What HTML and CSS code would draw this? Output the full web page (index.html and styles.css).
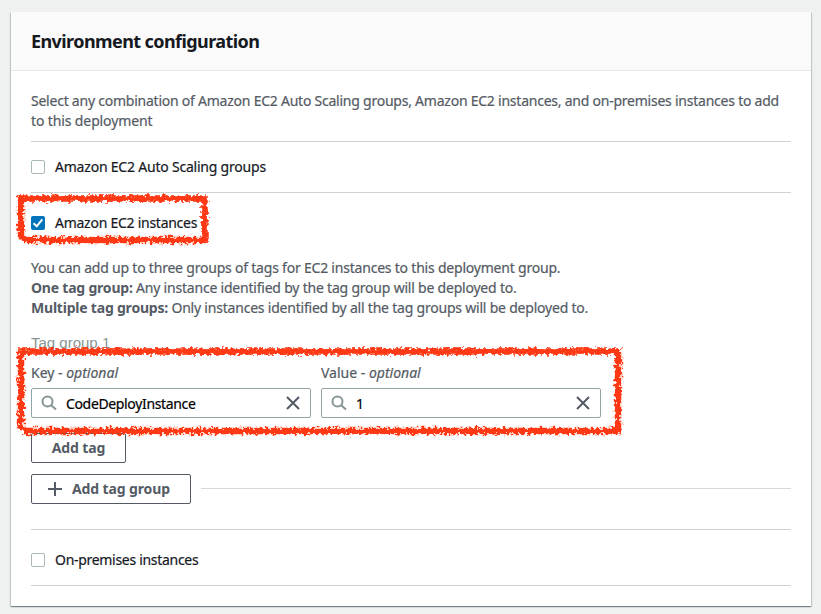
FILE: index.html
```html
<!DOCTYPE html>
<html lang="en">
<head>
<meta charset="utf-8">
<title>Environment configuration</title>
<link rel="stylesheet" href="styles.css">
</head>
<body>
<main class="panel">
  <header class="panel-header"><h2>Environment configuration</h2></header>
  <div class="panel-body">
    <p class="intro">Select any combination of Amazon EC2 Auto Scaling groups, Amazon EC2 instances, and on-premises instances to add<br><span class="short">to this deployment</span></p>
    <label class="option option-first"><i class="box"></i><span>Amazon EC2 Auto Scaling groups</span></label>
    <section class="ec2">
      <label class="option-checked"><i class="box checked"><svg viewBox="0 0 14 14"><path d="M2.5 7.3 5.8 10.3 11.3 3.3"/></svg></i><span>Amazon EC2 instances</span></label>
      <p class="help">You can add up to three groups of tags for EC2 instances to this deployment group.<br><b>One tag group:</b> Any instance identified by the tag group will be deployed to.<br><b>Multiple tag groups:</b> Only instances identified by all the tag groups will be deployed to.</p>
      <div class="group-title">Tag group 1</div>
      <div class="fields">
        <div class="field"><div class="label">Key - <em>optional</em></div>
          <div class="input"><svg class="search" viewBox="0 0 16 16"><circle cx="6.5" cy="6.5" r="5"/><path d="M10.2 10.2 15 14.6"/></svg><span class="value">CodeDeployInstance</span><svg class="close" viewBox="0 0 14 14"><path d="M1 1 13 13M13 1 1 13"/></svg></div></div>
        <div class="field"><div class="label">Value - <em>optional</em></div>
          <div class="input"><svg class="search" viewBox="0 0 16 16"><circle cx="6.5" cy="6.5" r="5"/><path d="M10.2 10.2 15 14.6"/></svg><span class="value">1</span><svg class="close" viewBox="0 0 14 14"><path d="M1 1 13 13M13 1 1 13"/></svg></div></div>
      </div>
      <div class="button add-tag">Add tag</div>
      <div class="add-group"><div class="button"><svg class="plus" viewBox="0 0 14 14"><path d="M7 0V14M0 7H14"/></svg>Add tag group</div><hr></div>
    </section>
    <label class="option option-last"><i class="box"></i><span>On-premises instances</span></label>
  </div>
</main>
<svg class="marker" width="821" height="614">
  <defs><filter id="rough" filterUnits="userSpaceOnUse" x="0" y="0" width="821" height="614">
    <feTurbulence type="fractalNoise" baseFrequency="0.32" numOctaves="2" seed="4" result="n"/>
    <feDisplacementMap in="SourceGraphic" in2="n" scale="8" xChannelSelector="R" yChannelSelector="G"/>
    <feGaussianBlur stdDeviation="0.3"/>
  </filter></defs>
  <g filter="url(#rough)">
    <path d="M21 238.5V198.5H204.5V240H23"/>
    <path d="M21 429.5V351.5H618V431H23"/>
  </g>
</svg>
</body>
</html>
```
FILE: styles.css
```css
* { box-sizing: border-box; }
body { margin: 0; padding: 12px 10px 0 11px; height: 614px; overflow: hidden; background: #eff1f1; color: #16191f; font: 14px/20px "Noto Sans", "Open Sans", sans-serif; letter-spacing: -.21px; -webkit-text-stroke: .2px; }
.panel { width: 800px; height: 594px; background: #fff; box-shadow: 0 1px 1px rgba(0,28,36,.3), 1px 1px 1px rgba(0,28,36,.15), -1px 1px 1px rgba(0,28,36,.15); }
.panel-header { height: 59px; padding: 18px 20px 0; background: #fafafa; border-bottom: 1px solid #e6e9e9; }
h2 { margin: 0; font-size: 18px; line-height: 22px; font-weight: 700; letter-spacing: -.58px; -webkit-text-stroke: 0; }
.panel-body { padding: 20px 20px 0; }
.intro { margin: 0; height: 51px; color: #545b64; border-bottom: 1px solid #ccd1d1; white-space: nowrap; letter-spacing: -.235px; }
.short { letter-spacing: -.12px; }
.option, .option-checked { display: flex; align-items: center; gap: 10px; }
.option-first { height: 51px; border-bottom: 1px solid #ccd1d1; }
.box { width: 14px; height: 14px; border: 1px solid #aab7b8; border-radius: 2px; background: #fff; flex: none; }
.checked { background: #0073bb; border: 0; }
.checked svg { display: block; width: 14px; height: 14px; fill: none; stroke: #fff; stroke-width: 2; }
.ec2 { height: 337px; border-bottom: 1px solid #ccd1d1; padding-top: 20px; }
.option-checked { height: 20px; letter-spacing: -.26px; }
.help { margin: 25px 0 0; color: #545b64; white-space: nowrap; }
.help b { font-weight: 700; -webkit-text-stroke: 0; }
.group-title { margin-top: 15px; height: 20px; color: #879596; font: 15px/20px "Liberation Sans", Arial, sans-serif; letter-spacing: 0; -webkit-text-stroke: 0; }
.fields { display: flex; gap: 10px; margin-top: 10px; }
.field { width: 280px; }
.label { color: #545b64; height: 25px; letter-spacing: 0; }
.input { height: 30px; border: 1px solid #95a5a6; border-radius: 2px; display: flex; align-items: center; padding: 0 10px 0 9px; color: #000; letter-spacing: -.35px; }
.search { width: 16px; height: 16px; fill: none; stroke: #879596; stroke-width: 2; margin-right: 9px; }
.value { flex: 1; padding-top: 2px; }
.close { width: 14px; height: 14px; fill: none; stroke: #545b64; stroke-width: 2; }
.button { height: 30px; border: 1px solid #545b64; border-radius: 2px; color: #545b64; font-weight: 700; letter-spacing: -.12px; -webkit-text-stroke: 0; display: flex; align-items: center; justify-content: center; }
.add-tag { width: 95px; margin-top: 15px; }
.add-group { display: flex; align-items: center; gap: 10px; margin-top: 11px; }
.add-group .button { width: 160px; justify-content: flex-start; padding-left: 16px; gap: 10px; }
.add-group hr { flex: 1; margin: -1px 0 0; border: 0; height: 1px; background: #d5dbdb; }
.plus { width: 14px; height: 14px; fill: none; stroke: #545b64; stroke-width: 2; }
.option-last { height: 56px; padding-top: 5px; border-bottom: 1px solid #ccd1d1; letter-spacing: -.3px; }
.marker { position: absolute; left: 0; top: 0; pointer-events: none; fill: none; stroke: #ff3816; stroke-width: 6.5; }
```
